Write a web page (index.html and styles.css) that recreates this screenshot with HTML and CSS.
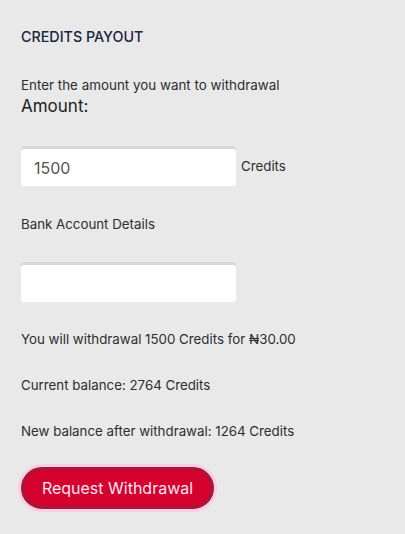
FILE: index.html
```html
<!DOCTYPE html>
<html lang="en">
<head>
  <meta charset="UTF-8" />
  <meta name="viewport" content="width=device-width, initial-scale=1" />
  <title>Credits Payout</title>
  <link rel="stylesheet" href="styles.css">
</head>
<body>
  <div class="payout">
    <h2 class="title">CREDITS PAYOUT</h2>
    <p class="intro">Enter the amount you want to withdrawal</p>
    <label class="amount-label" for="amount">Amount:</label>
    <div class="field-row">
      <input type="text" id="amount" class="field" value="1500" />
      <span class="unit">Credits</span>
    </div>
    <p class="bank-label">Bank Account Details</p>
    <input type="text" id="bank" class="field bank-field" />
    <p class="info">You will withdrawal 1500 Credits for ₦30.00</p>
    <p class="info">Current balance: 2764 Credits</p>
    <p class="info">New balance after withdrawal: 1264 Credits</p>
    <button class="request">Request Withdrawal</button>
  </div>
</body>
</html>
```

FILE: styles.css
```css
body {
  margin: 0;
  font-family: Inter, "Liberation Sans", sans-serif;
  background-color: #e9e9e9;
  color: #2e2e2e;
}
.payout {
  padding: 27px 21px 20px;
}
.title {
  margin: 0;
  font-size: 14.3px;
  font-weight: 500;
  line-height: 20px;
  color: #1c2541;
}
.intro {
  margin: 29px 0 0;
  font-size: 13.4px;
  line-height: 18px;
}
.amount-label {
  display: block;
  margin-top: 1px;
  font-size: 17px;
  line-height: 22px;
  color: #222;
}
.field-row {
  display: flex;
  align-items: center;
  margin-top: 29px;
}
.field {
  width: 215px;
  height: 40px;
  box-sizing: border-box;
  padding: 3px 13px 0;
  border: none;
  border-radius: 3px;
  background-color: #fff;
  box-shadow: inset 0 3px 0 #d8d8d8;
  font-family: inherit;
  font-size: 16px;
  color: #555;
}
.unit {
  margin-left: 5px;
  font-size: 13.3px;
}
.bank-label {
  margin: 29px 0 0;
  font-size: 13.3px;
  line-height: 18px;
}
.bank-field {
  display: block;
  margin-top: 29px;
}
.info {
  margin: 28px 0 0;
  font-size: 13.3px;
  line-height: 18px;
}
.request {
  display: block;
  margin-top: 27px;
  width: 193px;
  height: 42px;
  border: 3px solid #9c1c38;
  border-radius: 21px;
  background-color: #d4002e;
  box-shadow: 0 0 0 3px #ffcbe6;
  color: #ffe4ef;
  font-family: inherit;
  font-size: 16px;
  cursor: pointer;
}
```
